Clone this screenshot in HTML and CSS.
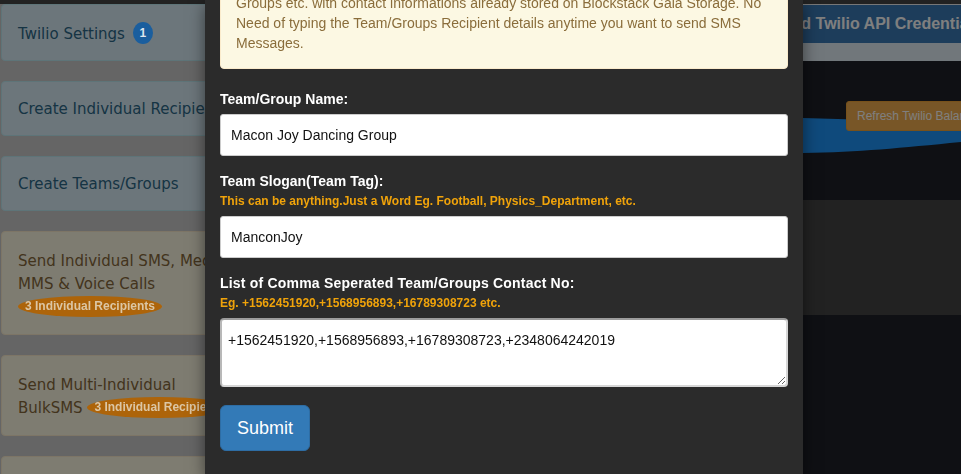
FILE: index.html
```html
<!DOCTYPE html>
<html lang="en">
<head>
<meta charset="utf-8">
<title>Create Teams/Groups</title>
<link rel="stylesheet" href="styles.css">
</head>
<body>
<div class="page">
  <div class="topbar"></div>
  <div class="layout">
    <aside class="sidebar">
      <div class="card info">Twilio Settings<span class="badge-num">1</span></div>
      <div class="card info">Create Individual Recipients</div>
      <div class="card info">Create Teams/Groups</div>
      <div class="card warn">Send Individual SMS, Media<br>MMS &amp; Voice Calls<br><span class="pill">3 Individual Recipients</span></div>
      <div class="card warn">Send Multi-Individual<br>BulkSMS <span class="pill">3 Individual Recipients</span></div>
      <div class="card warn">Send Team/Group BulkSMS</div>
    </aside>
    <main class="main">
      <div class="main-head">Saved Twilio API Credentials</div>
      <div class="main-strip"></div>
      <div class="hero">
        <svg class="swoosh" viewBox="0 0 661 139" preserveAspectRatio="none" aria-hidden="true">
          <path d="M0,72 C200,58 400,55 503,57 C560,58 620,62 661,60 L661,81 C600,87 560,91 503,92 C400,95 200,102 0,112 Z" fill="#1e94f8"/>
        </svg>
        <button class="btn-refresh" type="button">Refresh Twilio Balance</button>
      </div>
      <div class="section-gray"></div>
      <div class="section-dark"></div>
    </main>
  </div>
</div>

<div class="backdrop"></div>

<div class="modal">
  <div class="modal-body">
    <div class="alert">
      <span>Create Teams/Groups such as Football Team, Physics Department, Dancing</span>
      <span>Groups etc. with contact informations already stored on Blockstack Gala Storage. No</span>
      <span>Need of typing the Team/Groups Recipient details anytime you want to send SMS</span>
      <span>Messages.</span>
    </div>
    <form class="form">
      <div class="form-group">
        <label class="label">Team/Group Name:</label>
        <input class="field" type="text" value="Macon Joy Dancing Group">
      </div>
      <div class="form-group">
        <label class="label tight">Team Slogan(Team Tag):</label>
        <span class="help">This can be anything.Just a Word Eg. Football, Physics_Department, etc.</span>
        <input class="field" type="text" value="ManconJoy">
      </div>
      <div class="form-group last">
        <label class="label tight wide">List of Comma Seperated Team/Groups Contact No:</label>
        <span class="help">Eg. +1562451920,+1568956893,+16789308723 etc.</span>
        <textarea class="area">+1562451920,+1568956893,+16789308723,+2348064242019</textarea>
      </div>
      <button class="btn-submit" type="button">Submit</button>
    </form>
  </div>
</div>
</body>
</html>
```

FILE: styles.css
```css
* { box-sizing: border-box; }
html, body { margin: 0; height: 100%; }
body {
  font-family: "Liberation Sans", Arial, sans-serif;
  font-size: 14px;
  overflow: hidden;
  background: #1e2028;
}

.page { height: 474px; display: flex; flex-direction: column; }
.topbar { height: 4px; flex: none; background: #444; }
.layout { flex: 1; display: flex; min-height: 0; }

/* sidebar */
.sidebar {
  width: 300px;
  flex: none;
  background: #cacaca;
  padding-left: 1px;
  overflow: hidden;
  font-family: "DejaVu Sans", sans-serif;
  font-size: 15px;
  line-height: 23px;
}
.card {
  margin-bottom: 20px;
  padding: 16px 16px 14px;
  border: 1px solid;
  border-radius: 4px;
  white-space: nowrap;
}
.card.info { background: #d9edf7; border-color: #bce8f1; color: #2c6888; }
.card.info:first-child { padding-top: 18px; padding-bottom: 14px; }
.card.warn { background: #fcf8e3; border-color: #faebcc; color: #86683a; padding-top: 18px; padding-bottom: 15px; }

.badge-num {
  position: relative;
  z-index: 1045;
  display: inline-block;
  vertical-align: middle;
  margin-left: 8px;
  margin-top: -3px;
  width: 20px;
  height: 22px;
  border-radius: 50%;
  background: #1a5e9e;
  color: #dfe6ee;
  font: bold 12px/22px "Liberation Sans", Arial, sans-serif;
  text-align: center;
}
.pill {
  position: relative;
  z-index: 1045;
  display: inline-block;
  vertical-align: middle;
  margin-top: -2px;
  padding: 0 7px;
  height: 21px;
  border-radius: 50%;
  background: #ad640a;
  color: #dcc6a4;
  font: bold 12px/21px "Liberation Sans", Arial, sans-serif;
}

/* main */
.main { flex: 1; display: flex; flex-direction: column; min-width: 0; }
.main-head {
  height: 39px;
  flex: none;
  border-top: 1px solid #eee;
  background: #3a7ab6;
  color: #fff;
  font-weight: bold;
  font-size: 16px;
  line-height: 38px;
  padding-left: 464px;
  white-space: nowrap;
  overflow: hidden;
}
.main-strip { height: 18px; flex: none; background: #e3eef7; }
.hero {
  height: 139px;
  flex: none;
  position: relative;
  background: #1e2028;
  padding: 40px 0 0 546px;
  white-space: nowrap;
  overflow: hidden;
}
.swoosh { position: absolute; left: 0; top: 0; width: 100%; height: 100%; }
.btn-refresh {
  position: relative;
  height: 30px;
  padding: 0 10px;
  border: 1px solid #eea236;
  border-radius: 3px;
  background: #f0ad4e;
  color: #fff;
  font: 12px/18px "Liberation Sans", Arial, sans-serif;
}
.section-gray { height: 115px; flex: none; background: #444; }
.section-dark { flex: 1; background: #1e2028; }

/* overlay + modal */
.backdrop {
  position: fixed;
  inset: 0;
  z-index: 1040;
  background: rgba(0, 0, 0, 0.5);
}
.modal {
  position: fixed;
  z-index: 1050;
  top: 0;
  left: 205px;
  width: 598px;
  height: 474px;
  background: #2b2b2b;
  box-shadow: 0 5px 15px rgba(0, 0, 0, 0.5);
  overflow: hidden;
}
.modal-body { padding: 0 15px 15px; }

.alert {
  margin: -43px 0 20px;
  padding: 15px;
  border: 1px solid #faebcc;
  border-radius: 4px;
  background: #fcf8e3;
  color: #8a6d3b;
  line-height: 20px;
}
.alert span { display: block; white-space: nowrap; }

.form-group { margin-bottom: 15px; }
.form-group.last { margin-bottom: 18px; }
.label {
  display: block;
  margin-bottom: 5px;
  color: #fff;
  font-weight: bold;
  line-height: 20px;
}
.label.tight { margin-bottom: 1px; }
.label.wide { letter-spacing: 0.2px; }
.help {
  display: block;
  margin-bottom: 6px;
  color: #f0a30a;
  font-size: 12px;
  font-weight: bold;
  line-height: 18px;
  white-space: nowrap;
}
.field {
  display: block;
  width: 100%;
  height: 42px;
  padding: 0 10px;
  border: 1px solid #ccc;
  border-radius: 3px;
  background: #fff;
  color: #111;
  font: 14px "Liberation Sans", Arial, sans-serif;
}
.area {
  display: block;
  width: 100%;
  height: 69px;
  padding: 10px 6px;
  border: 2px solid #d6d6d6;
  border-top-color: #9c9c9c;
  border-left-color: #b8b8b8;
  border-radius: 4px;
  background: #fff;
  color: #111;
  font: 14px/20px "Liberation Sans", Arial, sans-serif;
  resize: vertical;
}
.btn-submit {
  display: inline-block;
  padding: 10px 16px;
  border: 1px solid #2e6da4;
  border-radius: 6px;
  background: #337ab7;
  color: #fff;
  font: 18px/24px "Liberation Sans", Arial, sans-serif;
}
```
